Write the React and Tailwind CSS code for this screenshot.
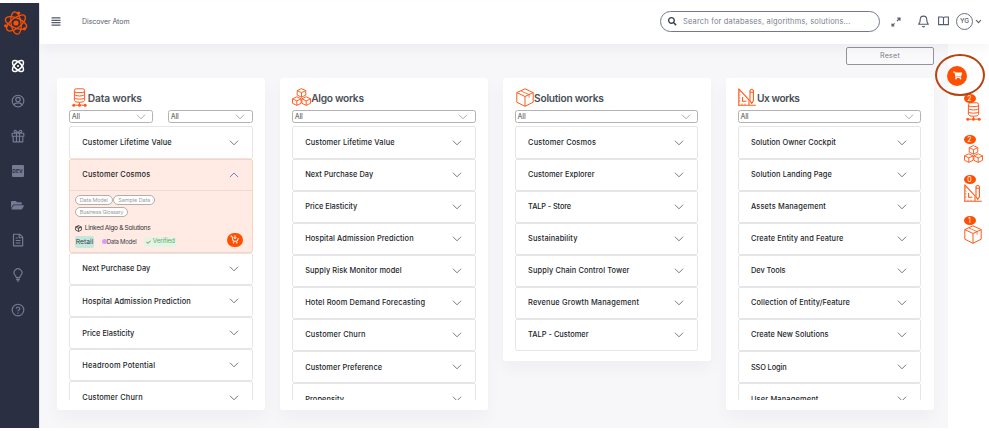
import { useLayoutEffect, useRef, useState } from "react";
import { FiBell } from "react-icons/fi";
import { FaSearch, FaShoppingCart, FaFolderOpen, FaCheck } from "react-icons/fa";

// Text whose tracking is adjusted so that it spans the given width.
function Fit({ w, className = "", children }) {
  const ref = useRef(null);
  const [ls, setLs] = useState(0);
  useLayoutEffect(() => {
    const natural = ref.current.getBoundingClientRect().width;
    setLs((w - natural) / children.length);
  }, []);
  return (
    <span ref={ref} style={{ letterSpacing: ls + "px" }} className={"inline-block shrink-0 whitespace-pre " + className}>
      {children}
    </span>
  );
}

function Chevron({ up, className = "" }) {
  return (
    <svg viewBox="0 0 10 6" fill="none" stroke="currentColor" strokeLinecap="round" strokeLinejoin="round" className={"h-[6px] w-[10px] shrink-0 " + className}>
      <path d={up ? "M1.2 4.8 5 1 8.8 4.8" : "M1.2 1 5 4.8 8.8 1"} strokeWidth="0.95" />
    </svg>
  );
}

function DbIcon({ className }) {
  return (
    <svg viewBox="0 0 15 19" fill="none" stroke="#ff5a1a" strokeWidth="1" className={className}>
      <rect x="2.4" y=".8" width="10.2" height="3.8" rx="1.9" />
      <path d="M2.4 3v3.2Q2.6 8 7.5 8T12.6 6.2V3M2.4 6.2v3.3Q2.6 11.2 7.5 11.2T12.6 9.5V6.2M2.4 9.5v3Q2.6 14.3 7.5 14.3T12.6 12.5v-3M7.5 14.3v2M3 17.2h9" />
      <g fill="#ff5a1a" stroke="none">
        <circle cx="1.8" cy="17.2" r="1.5" />
        <circle cx="7.5" cy="17.2" r="1.5" />
        <circle cx="13.2" cy="17.2" r="1.5" />
      </g>
    </svg>
  );
}

const cube = "M0 -4.3 4.3 -2.3V2.2L0 4.3 -4.3 2.2V-2.3ZM-4.3 -2.3 0 -.2 4.3 -2.3M0 -.2V4.3";
function CubesIcon({ className }) {
  return (
    <svg viewBox="0 0 19 18" fill="none" stroke="#ff5a1a" strokeWidth="0.95" strokeLinejoin="round" className={className}>
      <path d={cube} transform="translate(9.5 4.9)" />
      <path d={cube} transform="translate(4.8 13.1)" />
      <path d={cube} transform="translate(14.2 13.1)" />
    </svg>
  );
}

function BoxIcon({ className }) {
  return (
    <svg viewBox="0 0 18 19" fill="none" stroke="#ff5a1a" strokeWidth="1" strokeLinejoin="round" className={className}>
      <path d="M9 .8 17.2 4.6V14.2L9 18.3.8 14.2V4.6ZM.8 4.6 9 8.5 17.2 4.6M9 8.5v9.8" />
      <path d="M4.9 2.9 13.1 6.6v3.1" strokeWidth=".8" />
    </svg>
  );
}

function RulerIcon({ className }) {
  return (
    <svg viewBox="0 0 18 18" fill="none" stroke="#ff5a1a" strokeWidth="1.1" strokeLinejoin="round" className={className}>
      <path d="M.8 17.2V.9L11 11.8V17M0 17.2h17.8M4.6 9v4.2h3.8" />
      <path d="M1 4h1.4M1 7h1.4M1 10h1.4M1 13h1.4M4 17v-1.4M7 17v-1.4" strokeWidth=".8" />
      <path d="M12 12.8V2.6Q13.7-.2 15.4 2.6V12.8L13.7 15.4ZM12 4.2h3.4" />
    </svg>
  );
}

function AtomLogo() {
  return (
    <svg viewBox="0 0 24 24" fill="none" stroke="#ff4f00" strokeWidth="1.25" className="h-6 w-6">
      <ellipse cx="12" cy="12" rx="11.3" ry="5" transform="rotate(22 12 12)" />
      <ellipse cx="12" cy="12" rx="11.3" ry="5" transform="rotate(-38 12 12)" />
      <ellipse cx="12" cy="12" rx="11.3" ry="5" transform="rotate(82 12 12)" />
      <g fill="#ff4f00" stroke="none">
        <circle cx="12" cy="12" r="2.6" />
        <circle cx="14.7" cy="2" r="1.6" />
        <circle cx="1.6" cy="14.8" r="1.6" />
        <circle cx="20.5" cy="17.8" r="1.6" />
      </g>
    </svg>
  );
}

function AtomNav() {
  return (
    <svg viewBox="0 0 14 14" fill="none" stroke="#fff" strokeWidth="1.5" className="h-[14px] w-[14px]">
      <ellipse cx="7" cy="7" rx="7" ry="3.4" transform="rotate(45 7 7)" />
      <ellipse cx="7" cy="7" rx="7" ry="3.4" transform="rotate(-45 7 7)" />
      <circle cx="7" cy="7" r="1.1" fill="#fff" stroke="none" />
    </svg>
  );
}

function Line({ children }) {
  return (
    <svg viewBox="0 0 14 14" fill="none" stroke="currentColor" strokeWidth="1.15" strokeLinejoin="round" className="h-[14px] w-[14px]">
      {children}
    </svg>
  );
}

function Sidebar() {
  const slot = "flex h-[34.8px] shrink-0 items-center justify-center";
  return (
    <aside className="flex w-[39px] shrink-0 flex-col bg-[#2a3042] pr-[4px] text-[#757b93]">
      <div className="flex h-[46px] items-center pb-[7px] pl-[4px]"><AtomLogo /></div>
      <div className={slot + " pl-[1px]"}><AtomNav /></div>
      <div className={slot}>
        <Line><circle cx="7" cy="7" r="5.8" /><circle cx="7" cy="5.5" r="2.2" /><path d="M3 11Q3.5 8.8 7 8.8T11 11" /></Line>
      </div>
      <div className={slot}>
        <Line><path d="M1.2 4.2h11.6v3H1.2ZM2.2 7.2v5.6h9.6V7.2M5.5 4.2v8.6M8.5 4.2v8.6M7 4Q3 4 3.2 2.3 4.5-.2 7 4 9.5-.2 10.8 2.3 11 4 7 4" /></Line>
      </div>
      <div className={slot}>
        <span className="flex h-[11.5px] w-[12px] items-center justify-center rounded-[1px] bg-[#757b93] text-[5px] font-bold text-[#2a3042]">DEV</span>
      </div>
      <div className={slot}><FaFolderOpen className="h-[12.5px] w-[13px]" /></div>
      <div className={slot}>
        <Line><path d="M2.5 1.2h6.2l3 3v8.6H2.5ZM8.2 1.2v3.5h3.5M4.7 5h2M4.7 7.5h4.8M4.7 10h4.8" /></Line>
      </div>
      <div className={slot}>
        <Line><path d="M5.2 9.6Q5.2 8.5 4 7.2A3.9 3.9 0 1 1 10 7.2Q8.8 8.5 8.8 9.6ZM5.2 11.3h3.6M5.8 12.8h2.4" /></Line>
      </div>
      <div className={slot}>
        <Line><circle cx="7" cy="7" r="5.8" /><path d="M5.2 5.6Q5.3 4 7 4T8.8 5.6Q8.8 6.4 7.8 6.9T7 8.4M7 9.5v1.2" /></Line>
      </div>
    </aside>
  );
}

function Header() {
  return (
    <header className="z-10 flex h-[41px] shrink-0 items-center bg-white pr-[7px] pl-[11px] pb-[4px] text-[#555b6d] shadow-[0_6px_12px_rgba(18,38,63,0.04)]">
      <svg viewBox="0 0 10 9" className="h-[9px] w-[10px]" fill="none" stroke="currentColor" strokeWidth="1.2">
        <path d="M.5 .9h9M.5 3.3h9M.5 5.7h9M.5 8.1h9" />
      </svg>
      <Fit w={47.5} className="mt-[1px] ml-[21px] text-[7px]">Discover Atom</Fit>
      <div className="ml-auto flex h-[21.5px] w-[220px] items-center rounded-full border border-[#74788d] pl-[7px]">
        <FaSearch className="h-[8.5px] w-[8.5px] text-[#343a46]" />
        <Fit w={167.5} className="ml-[6.5px] text-[7.5px] text-[#7c7f88]">Search for databases, algorithms, solutions...</Fit>
      </div>
      <svg viewBox="0 0 10 10" fill="none" stroke="currentColor" strokeWidth="1.1" className="ml-[11px] h-[10px] w-[10px]">
        <path d="M6 4 9 1M6.2 1H9v2.8M3.6 6.4 1 9M1 6.6V9h2.4" />
      </svg>
      <FiBell className="ml-[15.5px] h-[13px] w-[13px]" />
      <svg viewBox="0 0 11 10" fill="none" stroke="currentColor" strokeWidth="1.1" className="mb-[2px] ml-[8.5px] h-[10px] w-[11px]">
        <path d="M.6 1h3.7Q5.5 1 5.5 2 5.5 1 6.7 1h3.7v7.6H6.7Q5.5 8.6 5.5 9.3 5.5 8.6 4.3 8.6H.6ZM5.5 2v7" />
      </svg>
      <span className="ml-[7px] flex h-[17px] w-[17px] items-center justify-center rounded-full border border-[#6b7080] text-[6.5px] font-medium">YG</span>
      <svg viewBox="0 0 7 5" fill="none" stroke="currentColor" strokeWidth="1.1" className="ml-[2px] h-[5px] w-[7px]"><path d="M1 1 3.5 3.7 6 1" /></svg>
    </header>
  );
}

function Select({ className }) {
  return (
    <div className={"flex h-[13px] items-center justify-between rounded-[2.5px] border border-[#b3b3b3] pr-[6.5px] pl-[1.5px] " + className}>
      <Fit w={8} className="pt-[1.2px] text-[7px] font-medium text-[#6f6f6f]">All</Fit>
      <Chevron className="mt-[1.5px] text-[#a8a8a8]" />
    </div>
  );
}

function Row({ text, w }) {
  return (
    <div className="flex h-[32.1px] shrink-0 items-center justify-between rounded-[2px] border border-[#e6e6e9] pr-[13px] pl-[12px] text-[#212529]">
      <Fit w={w} className="pt-[1.5px] text-[7.4px] font-medium">{text}</Fit>
      <Chevron className="text-[#707379]" />
    </div>
  );
}

function Pill({ w, children }) {
  return (
    <span className="flex h-[10px] items-center rounded-full border border-[#b5adaa] bg-white px-[4px] text-[5.4px] text-[#a09c9b]">
      <Fit w={w}>{children}</Fit>
    </span>
  );
}

function OpenRow() {
  return (
    <div className="flex h-[94.5px] shrink-0 flex-col rounded-[2px] border border-[#fbd3c3] bg-[#ffebe3]">
      <div className="flex h-[31px] items-center justify-between border-b border-[#ecd9d3] pr-[13px] pl-[12px] text-[#212529]">
        <Fit w={68} className="pt-[1.5px] text-[7.4px] font-medium">Customer Cosmos</Fit>
        <Chevron up className="text-[#6b74d6]" />
      </div>
      <div className="flex flex-col pt-[4.5px] pl-[4.5px]">
        <div className="flex gap-[0.5px]"><Pill w={28}>Data Model</Pill><Pill w={32}>Sample Data</Pill></div>
        <div className="mt-[2.2px] flex"><Pill w={43.5}>Business Glossary</Pill></div>
        <div className="mt-[6.5px] flex h-[9px] items-center">
          <svg viewBox="0 0 8 8" fill="none" stroke="#333" strokeWidth=".9" className="h-[7px] w-[7px]"><path d="M4 .6 7.3 2.2V5.8L4 7.4.7 5.8V2.2ZM.7 2.2 4 4 7.3 2.2M4 4v3.4M2.3 1.4 5.7 3.2" /></svg>
          <Fit w={65.5} className="ml-[3px] pt-[1px] text-[6.6px] text-[#33363b]">Linked Algo &amp; Solutions</Fit>
        </div>
        <div className="mt-[1px] flex h-[16px] items-center pr-[9px]">
          <span className="flex h-[12px] w-[19.5px] items-center justify-center rounded-[2px] bg-[#c5e8dd] text-[6.8px] text-[#3d4248]"><Fit w={17.5} className="pt-[1px]">Retail</Fit></span>
          <i className="mb-[1px] ml-[8px] h-[4.5px] w-[4.5px] rounded-full bg-[#d79bf8]" />
          <Fit w={29.5} className="text-[6px] text-[#3d4248]">Data Model</Fit>
          <span className="ml-[7.5px] flex h-[10px] w-[32px] items-center rounded-[2px] bg-[#e5f3e6] pl-[2.5px] text-[#5eae63]">
            <FaCheck className="h-[4.5px] w-[5px]" />
            <Fit w={22} className="ml-[1.5px] text-[6.4px]">Verified</Fit>
          </span>
          <span className="mb-[4px] ml-auto flex h-[14px] w-[16px] items-center justify-center rounded-full bg-[#ff4f00]">
            <svg viewBox="0 0 9 9" fill="none" stroke="#fff" strokeWidth="1" className="h-[9px] w-[9px]"><path d="M.5 1h1.4l1.3 5.2h4L8.4 3M5 .3v3.4M3.7 2.3 5 3.7 6.3 2.3" /><circle cx="3.6" cy="7.8" r=".4" /><circle cx="6.8" cy="7.8" r=".4" /></svg>
          </span>
        </div>
      </div>
    </div>
  );
}

function Card({ icon, title, titleW, selects, rows, open, tall = true }) {
  return (
    <section className={"flex w-[208px] shrink-0 flex-col rounded-[3px] bg-white px-[12.3px] shadow-[0_8px_16px_rgba(18,38,63,0.035)] " + (tall ? "h-[332px]" : "h-[283px]")}>
      <div className="flex h-[31.5px] shrink-0 items-center pt-[7px] text-[#495057]">
        {icon}
        <Fit w={titleW} className="pt-[1.2px] text-[10.2px] font-semibold">{title}</Fit>
      </div>
      <div className="flex shrink-0 justify-between">{selects}</div>
      <div className={"mt-[3.8px] flex flex-col overflow-hidden " + (tall ? "h-[273.7px]" : "")}>
        {rows.slice(0, 1).map((r) => <Row key={r[0]} text={r[0]} w={r[1]} />)}
        {open && <OpenRow />}
        {rows.slice(1).map((r) => <Row key={r[0]} text={r[0]} w={r[1]} />)}
      </div>
    </section>
  );
}

const dataRows = [["Customer Lifetime Value", 89.5], ["Next Purchase Day", 68], ["Hospital Admission Prediction", 108.5], ["Price Elasticity", 52], ["Headroom Potential", 73], ["Customer Churn", 60.5]];
const algoRows = [["Customer Lifetime Value", 89.5], ["Next Purchase Day", 68], ["Price Elasticity", 52], ["Hospital Admission Prediction", 108.5], ["Supply Risk Monitor model", 96.5], ["Hotel Room Demand Forecasting", 120], ["Customer Churn", 60.5], ["Customer Preference", 77], ["Propensity", 39]];
const solutionRows = [["Customer Cosmos", 68], ["Customer Explorer", 66.5], ["TALP - Store", 43], ["Sustainability", 49.5], ["Supply Chain Control Tower", 101.5], ["Revenue Growth Management", 111], ["TALP - Customer", 60.5]];
const uxRows = [["Solution Owner Cockpit", 85], ["Solution Landing Page", 81], ["Assets Management", 75], ["Create Entity and Feature", 92.5], ["Dev Tools", 34.5], ["Collection of Entity/Feature", 99], ["Create New Solutions", 77.5], ["SSO Login", 35.5], ["User Management", 67.5]];

function RailItem({ n, children }) {
  return (
    <div className="flex h-[40.7px] flex-col">
      <span className="z-10 flex h-[9px] w-[12px] shrink-0 items-center justify-center rounded-[50%] bg-[#ff4f00] text-[7px] leading-none text-white">{n}</span>
      {children}
    </div>
  );
}

export default function App() {
  return (
    <div className="flex h-[431px] w-[989px] overflow-hidden bg-white py-[3px] font-['Inter','Liberation_Sans',sans-serif] leading-[1.2]">
      <Sidebar />
      <div className="flex min-w-0 flex-1 flex-col border-l border-[#e4e5ed]">
        <Header />
        <div className="flex min-h-0 flex-1">
          <main className="flex w-[908px] shrink-0 flex-col bg-[#f7f7fa] pl-[17px]">
            <div className="mt-[3.2px] mr-[14px] flex h-[18px] w-[88px] shrink-0 items-center justify-center self-end rounded-[2px] border border-[#94959b] bg-[#fafafc] text-[7.2px] text-[#7c7f88]">
              <Fit w={20}>Reset</Fit>
            </div>
            <div className="mt-[13px] flex items-start gap-[14.9px]">
              <Card title="Data works" titleW={54} open rows={dataRows} icon={<DbIcon className="mr-[1px] ml-[2.5px] h-[19px] w-[15px] shrink-0" />} selects={<><Select className="w-[84px]" /><Select className="w-[84.5px]" /></>} />
              <Card title="Algo works" titleW={52.5} rows={algoRows} icon={<CubesIcon className="h-[18px] w-[19px] shrink-0" />} selects={<Select className="w-full" />} />
              <Card title="Solution works" titleW={69.5} rows={solutionRows} tall={false} icon={<BoxIcon className="mr-[0.5px] ml-[0.5px] h-[19px] w-[18px] shrink-0" />} selects={<Select className="w-full" />} />
              <Card title="Ux works" titleW={42.5} rows={uxRows} icon={<RulerIcon className="mr-[0.5px] ml-[0.5px] h-[18px] w-[18px] shrink-0" />} selects={<Select className="w-full" />} />
            </div>
          </main>
          <aside className="relative flex flex-1 flex-col pt-[21.5px]">
            <div className="mb-[8.5px] ml-[-1px] flex h-[20px] w-[20px] shrink-0 items-center justify-center rounded-full bg-[#ff4f00] text-white">
              <FaShoppingCart className="h-[9px] w-[9px]" />
            </div>
            <div className="flex flex-col pl-[15.5px]">
              <RailItem n="2"><DbIcon className="mt-[-1px] ml-[2px] h-[19px] w-[15px] shrink-0" /></RailItem>
              <RailItem n="2"><CubesIcon className="mt-[1px] h-[18px] w-[19px] shrink-0" /></RailItem>
              <RailItem n="0"><RulerIcon className="h-[18px] w-[18px] shrink-0" /></RailItem>
              <RailItem n="1"><BoxIcon className="h-[19px] w-[18px] shrink-0" /></RailItem>
            </div>
            <div className="absolute top-[9.5px] left-[-13px] z-20 h-[42.5px] w-[50px] rounded-[50%] border-2 border-[#b8430f]" />
          </aside>
        </div>
      </div>
    </div>
  );
}
